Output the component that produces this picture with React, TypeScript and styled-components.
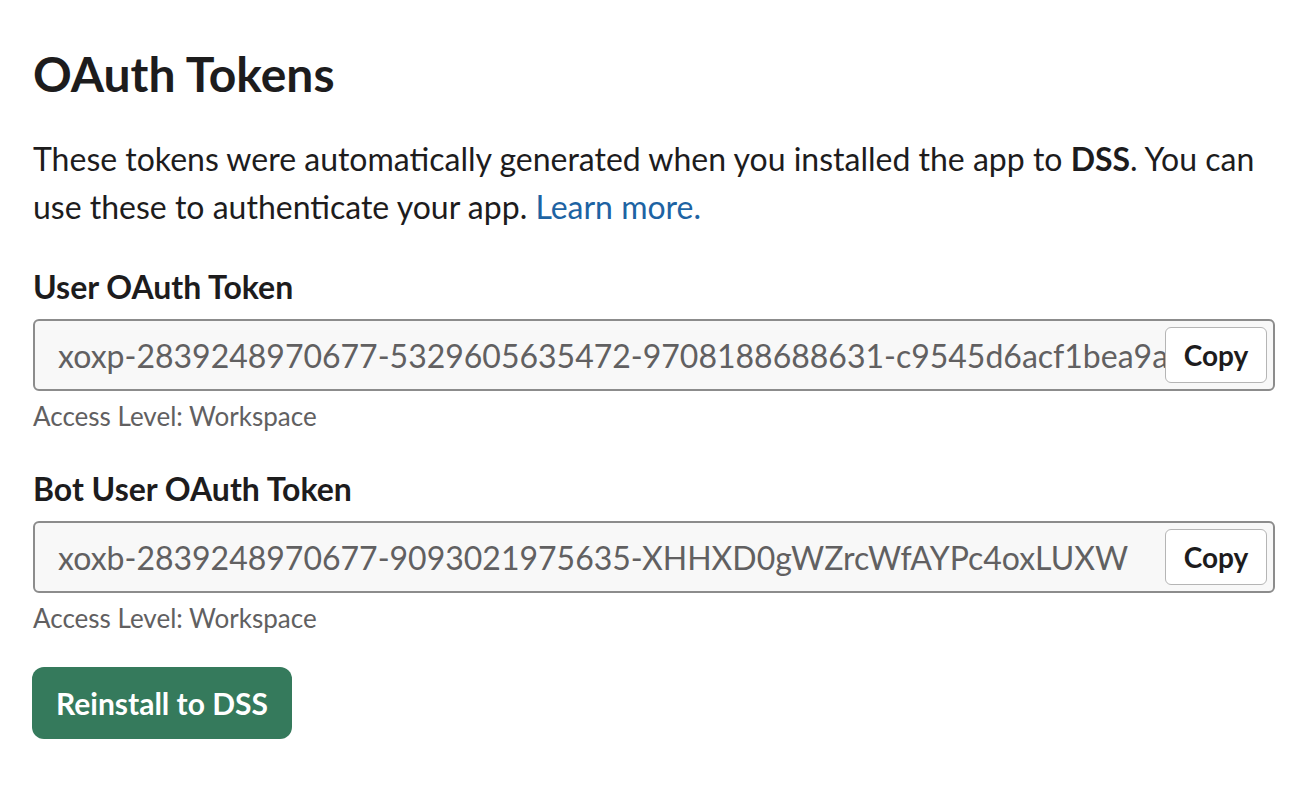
import React from "react";
import styled, { createGlobalStyle } from "styled-components";

const Global = createGlobalStyle`
  html, body { margin: 0; padding: 0; background: #ffffff; }
  body { font-family: Lato, "Noto Sans", sans-serif; color: #1d1c1d; -webkit-font-smoothing: antialiased; }
`;

const Page = styled.div`
  padding: 45px 37px 40px 33px;
  display: flex;
  flex-direction: column;
`;

const Title = styled.h1`
  margin: 0;
  font-size: 48px;
  line-height: 58px;
  font-weight: 700;
  color: #1d1c1d;
`;

const Intro = styled.p`
  margin: 32px 0 0;
  font-size: 32px;
  line-height: 48px;
  color: #1d1c1d;
  b { font-weight: 700; }
`;

const Link = styled.a`
  color: #1d63a3;
  text-decoration: none;
`;

const Section = styled.section<{ $top: number }>`
  display: flex;
  flex-direction: column;
  margin-top: ${(p) => p.$top}px;
`;

const Label = styled.div`
  font-size: 32px;
  line-height: 40px;
  font-weight: 700;
  color: #1d1c1d;
`;

const Field = styled.div`
  margin-top: 12px;
  height: 72px;
  box-sizing: border-box;
  border: 2px solid #8c8c8c;
  border-radius: 6px;
  background: #f8f8f8;
  display: flex;
  align-items: center;
  padding: 0 6px 0 23px;
`;

const TokenText = styled.div`
  flex: 1;
  min-width: 0;
  overflow: hidden;
  white-space: nowrap;
  font-size: 32px;
  color: #616061;
`;

const CopyButton = styled.button`
  flex: none;
  height: 56px;
  width: 102px;
  box-sizing: border-box;
  border: 1.5px solid #b5b5b5;
  border-radius: 6px;
  background: #ffffff;
  font-family: Lato, "Noto Sans", sans-serif;
  font-size: 28px;
  font-weight: 700;
  color: #1d1c1d;
  padding: 0;
  cursor: pointer;
`;

const Hint = styled.div`
  margin-top: 7px;
  font-size: 26px;
  line-height: 36px;
  color: #616061;
`;

const Primary = styled.button`
  align-self: flex-start;
  margin-top: 31px;
  margin-left: -1px;
  height: 72px;
  padding: 0 24px;
  border: none;
  border-radius: 12px;
  background: #357a5c;
  color: #ffffff;
  font-family: Lato, "Noto Sans", sans-serif;
  font-size: 30px;
  font-weight: 700;
  cursor: pointer;
`;

const tokens = [
  {
    label: "User OAuth Token",
    value: "xoxp-2839248970677-5329605635472-9708188688631-c9545d6acf1bea9a3e70f2b4d81c6a57",
    top: 36,
  },
  {
    label: "Bot User OAuth Token",
    value: "xoxb-2839248970677-9093021975635-XHHXD0gWZrcWfAYPc4oxLUXW",
    top: 35,
  },
];

export default function App() {
  return (
    <>
      <Global />
      <Page>
        <Title>OAuth Tokens</Title>
        <Intro>
          These tokens were automatically generated when you installed the app to <b>DSS</b>. You can
          use these to authenticate your app. <Link href="#">Learn more.</Link>
        </Intro>
        {tokens.map((t) => (
          <Section key={t.label} $top={t.top}>
            <Label>{t.label}</Label>
            <Field>
              <TokenText>{t.value}</TokenText>
              <CopyButton>Copy</CopyButton>
            </Field>
            <Hint>Access Level: Workspace</Hint>
          </Section>
        ))}
        <Primary>Reinstall to DSS</Primary>
      </Page>
    </>
  );
}
